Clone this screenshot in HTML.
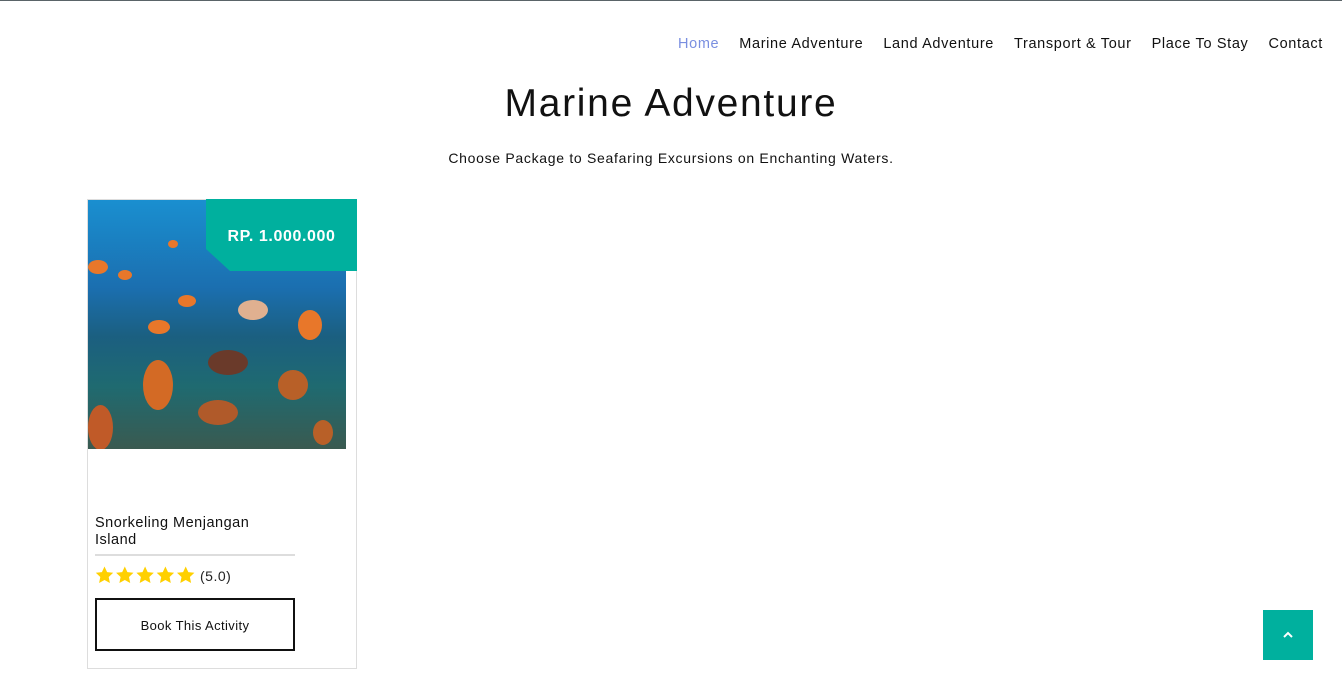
<!DOCTYPE html>
<html><head><style>
*{margin:0;padding:0;box-sizing:border-box}
body{width:1342px;height:681px;background:#fff;font-family:"Liberation Sans",sans-serif;color:#111;position:relative;overflow:hidden}
.line{position:absolute;left:0;top:0;width:1342px;height:1px;background:#5a6468}
.nav{position:absolute;top:36px;right:19px;display:flex;gap:20px;font-size:14.5px;letter-spacing:0.65px}
.nav span{color:#111}
.nav span.a{color:#7a8fe0}
h1{position:absolute;top:82px;left:0;width:1342px;text-align:center;font-size:39px;font-weight:normal;color:#111;letter-spacing:1.7px}
.sub{position:absolute;top:150px;width:1342px;text-align:center;font-size:14px;letter-spacing:0.7px}
.card{position:absolute;left:87px;top:199px;width:270px;height:470px;border:1px solid #ddd}
.img{position:absolute;left:0;top:0;width:258px;height:249px;background:linear-gradient(180deg,#1a8fd0 0%,#1b6fb0 35%,#1b5f80 55%,#1f6a70 75%,#3a5a50 100%);overflow:hidden}
.f{position:absolute;border-radius:50%;background:#e8772a}
.badge{position:absolute;left:118px;top:-1px;width:151px;height:72px;background:#00b09e;clip-path:polygon(0 0,100% 0,100% 100%,24px 100%,0 50px);color:#fff;font-weight:bold;font-size:16px;letter-spacing:0.6px;display:flex;align-items:center;justify-content:center;padding-top:4px}
.t{position:absolute;left:7px;top:315px;font-size:14.5px;line-height:17px;width:175px;letter-spacing:0.5px}
.hr{position:absolute;left:7px;top:354px;width:200px;height:2px;background:#ddd}
.st{position:absolute;left:7px;top:366px;font-size:14px;color:#222;display:flex;align-items:center;gap:1px}
.st span{margin-left:4px;letter-spacing:0.5px}
.btn{position:absolute;left:7px;top:398px;width:200px;height:53px;border:2px solid #111;display:flex;align-items:center;justify-content:center;font-size:13px;letter-spacing:0.4px;padding-top:2px}
.up{position:absolute;left:1263px;top:610px;width:50px;height:50px;background:#00b09e}
</style></head><body>
<div class="line"></div>
<div class="nav"><span class="a">Home</span><span>Marine Adventure</span><span>Land Adventure</span><span>Transport &amp; Tour</span><span>Place To Stay</span><span>Contact</span></div>
<h1>Marine Adventure</h1>
<div class="sub">Choose Package to Seafaring Excursions on Enchanting Waters.</div>
<div class="card">
<div class="img">
<div class="f" style="left:0;top:60px;width:20px;height:14px"></div>
<div class="f" style="left:30px;top:70px;width:14px;height:10px"></div>
<div class="f" style="left:60px;top:120px;width:22px;height:14px"></div>
<div class="f" style="left:90px;top:95px;width:18px;height:12px"></div>
<div class="f" style="left:55px;top:160px;width:30px;height:50px;background:#d36a25"></div>
<div class="f" style="left:120px;top:150px;width:40px;height:25px;background:#6a3a2a"></div>
<div class="f" style="left:110px;top:200px;width:40px;height:25px;background:#b05a2a"></div>
<div class="f" style="left:190px;top:170px;width:30px;height:30px;background:#b86028"></div>
<div class="f" style="left:210px;top:110px;width:24px;height:30px"></div>
<div class="f" style="left:0;top:205px;width:25px;height:45px;background:#c05a28"></div>
<div class="f" style="left:150px;top:100px;width:30px;height:20px;background:#e0b090"></div>
<div class="f" style="left:80px;top:40px;width:10px;height:8px"></div>
<div class="f" style="left:225px;top:220px;width:20px;height:25px;background:#b86028"></div>
</div>
<div class="badge">RP. 1.000.000</div>
<div class="t">Snorkeling Menjangan Island</div>
<div class="hr"></div>
<div class="st">
<svg width="100" height="19" viewBox="0 0 100 19"><g fill="#ffd000"><path id="s" d="M9.5 0.5l2.6 5.6 6.1.7-4.5 4.2 1.2 6-5.4-3-5.4 3 1.2-6L.8 6.8l6.1-.7z"/><use href="#s" x="20.3"/><use href="#s" x="40.6"/><use href="#s" x="60.9"/><use href="#s" x="81.2"/></g></svg>
<span>(5.0)</span></div>
<div class="btn">Book This Activity</div>
</div>
<div class="up"><svg width="50" height="50"><path d="M21 27l4-4 4 4" stroke="#fff" stroke-width="2" fill="none"/></svg></div>
</body></html>
